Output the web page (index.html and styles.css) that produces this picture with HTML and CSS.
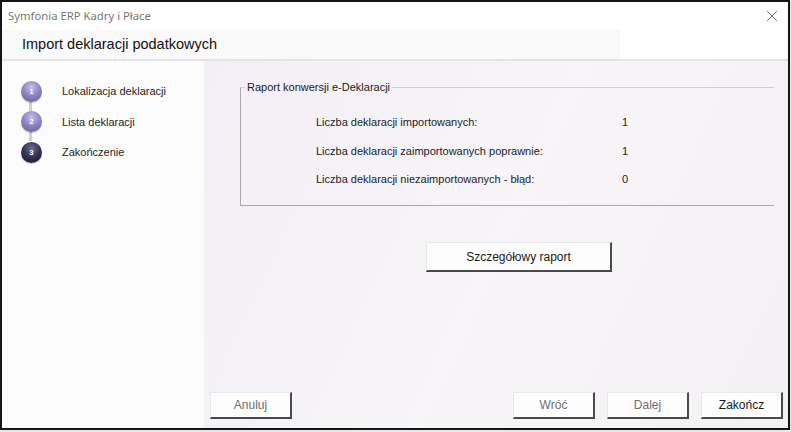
FILE: index.html
```html
<!DOCTYPE html>
<html lang="pl">
<head>
<meta charset="utf-8">
<title>Symfonia ERP Kadry i Płace</title>
<link rel="stylesheet" href="styles.css">
</head>
<body>
<div class="window">
  <div class="titlebar">
    <span class="app-title">Symfonia ERP Kadry i Płace</span>
    <svg class="close" width="12" height="12" viewBox="0 0 12 12"><path d="M1 1L11 11M11 1L1 11" stroke="#777" stroke-width="1"/></svg>
  </div>
  <div class="header">
    <div class="header-title">Import deklaracji podatkowych</div>
  </div>
  <div class="content">
    <aside class="steps">
      <div class="step"><span class="dot">1</span><span class="label">Lokalizacja deklaracji</span></div>
      <div class="step"><span class="dot">2</span><span class="label">Lista deklaracji</span></div>
      <div class="step current"><span class="dot">3</span><span class="label">Zakończenie</span></div>
    </aside>
    <main class="main">
      <fieldset class="group">
        <legend>Raport konwersji e-Deklaracji</legend>
        <div class="row"><span class="key">Liczba deklaracji importowanych:</span><span class="val">1</span></div>
        <div class="row"><span class="key">Liczba deklaracji zaimportowanych poprawnie:</span><span class="val">1</span></div>
        <div class="row"><span class="key">Liczba deklaracji niezaimportowanych - błąd:</span><span class="val">0</span></div>
      </fieldset>
      <div class="report-wrap"><button class="btn report">Szczegółowy raport</button></div>
      <div class="footer">
        <button class="btn small disabled">Anuluj</button>
        <div class="nav">
          <button class="btn small disabled">Wróć</button>
          <button class="btn small disabled">Dalej</button>
          <button class="btn small">Zakończ</button>
        </div>
      </div>
    </main>
  </div>
</div>
</body>
</html>
```

FILE: styles.css
```css
html, body {
  margin: 0;
  padding: 0;
  background: #e8e8e8;
}
body {
  width: 791px;
  height: 432px;
  overflow: hidden;
  font-family: "Liberation Sans", Arial, sans-serif;
  color: #1a1a1a;
}
.window {
  width: 786px;
  height: 426px;
  border: 2px solid #151515;
  background: #fff;
  display: flex;
  flex-direction: column;
}
.titlebar {
  height: 28px;
  display: flex;
  align-items: center;
  justify-content: space-between;
  padding: 0 10px 0 6px;
  background: #fff;
}
.app-title {
  font-family: "Noto Sans", "Open Sans", sans-serif;
  font-size: 11.3px;
  color: #777;
  margin-top: -1px;
}
.header {
  height: 29px;
  border-bottom: 2px solid #e4e4e4;
  display: flex;
}
.header-title {
  width: 598px;
  padding-left: 20px;
  background: #f9f9f9;
  font-size: 14.5px;
  line-height: 29px;
  color: #111;
}
.content {
  flex: 1;
  display: flex;
}
.steps {
  width: 202px;
  background: #fcfcfc;
  padding-top: 15px;
  box-sizing: border-box;
}
.step {
  display: flex;
  align-items: center;
  height: 30.5px;
  padding-left: 19px;
  position: relative;
}
.step + .step::before {
  content: "";
  position: absolute;
  left: 27px;
  top: -12px;
  width: 3px;
  height: 16px;
  background: #d0d0d4;
}
.dot {
  width: 21px;
  height: 21px;
  border-radius: 50%;
  background: radial-gradient(circle at 50% 30%, #c7c0e6 0%, #8f86c2 45%, #5f5796 100%);
  box-shadow: 0 1px 1px rgba(0,0,0,0.25);
  color: #fff;
  font-size: 8px;
  font-weight: bold;
  display: flex;
  align-items: center;
  justify-content: center;
  position: relative;
  z-index: 1;
}
.current .dot {
  background: radial-gradient(circle at 50% 30%, #6d6890 0%, #34304f 50%, #1a1830 100%);
}
.label {
  margin-left: 20px;
  font-size: 11px;
  color: #1e1e1e;
}
.main {
  flex: 1;
  background: linear-gradient(115deg, #f3eff6 0%, #f7f5f8 50%, #f4f1f5 100%);
  display: flex;
  flex-direction: column;
  padding: 20px 0 9px 6px;
  box-sizing: border-box;
}
.group {
  margin: 0 0 0 30px;
  width: 534px;
  height: 125px;
  box-sizing: border-box;
  padding: 23px 0 0 0;
  border: none;
  border-top: 1px solid #cfcfcf;
  border-left: 1px solid #aaa;
  border-bottom: 1px solid #aaa;
  min-width: 0;
}
.group legend {
  font-size: 11px;
  padding: 0 2px;
  margin-left: 4px;
  color: #1a1a1a;
}
.row {
  display: flex;
  height: 28.5px;
  font-size: 11px;
  color: #222;
  padding-left: 75px;
}
.key {
  width: 306px;
}
.btn {
  font-family: "Liberation Sans", Arial, sans-serif;
  font-size: 12px;
  background: #fdfdfd;
  border: 1px solid #e8e8e8;
  border-right: 2px solid #4a4a4a;
  border-bottom: 2px solid #4a4a4a;
  color: #1a1a1a;
  padding: 0;
}
.report-wrap {
  padding-left: 216px;
  margin-top: 36px;
}
.report {
  width: 186px;
  height: 30px;
}
.footer {
  margin-top: auto;
  display: flex;
  justify-content: space-between;
  padding-right: 5px;
}
.nav {
  display: flex;
  gap: 12px;
}
.small {
  width: 82px;
  height: 27px;
}
.disabled {
  color: #6d6d6d;
}
```
